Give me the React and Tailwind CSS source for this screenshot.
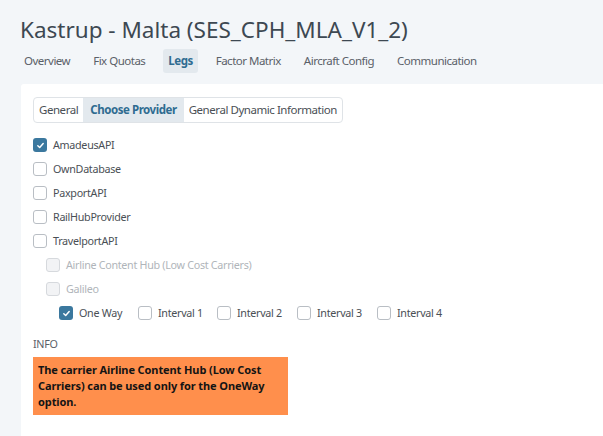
import React from "react";

function Box({ checked, disabled }) {
  if (checked) {
    return (
      <span className="w-[14px] h-[14px] rounded-[3px] bg-[#3b789e] flex items-center justify-center shrink-0">
        <svg width="9" height="9" viewBox="0 0 10 10" fill="none">
          <path d="M2 5.3 L4.1 7.3 L8 2.8" stroke="white" strokeWidth="1.6" strokeLinecap="round" strokeLinejoin="round" />
        </svg>
      </span>
    );
  }
  return (
    <span
      className={
        "w-[14px] h-[14px] rounded-[3px] border shrink-0 " +
        (disabled ? "border-[#d6d9dd] bg-[#f2f3f5]" : "border-[#b9bec4] bg-white")
      }
    />
  );
}

function Row({ label, checked, disabled, indent }) {
  return (
    <div className={"flex items-center gap-[6px] h-[24px] " + (indent || "")}>
      <Box checked={checked} disabled={disabled} />
      <span className={disabled ? "text-[#b0b5ba]" : "text-[#4a4f55]"}>{label}</span>
    </div>
  );
}

export default function App() {
  return (
    <div className="w-[603px] h-[436px] bg-[#f3f6f9] overflow-hidden font-['Noto_Sans','Open_Sans',sans-serif] text-[12px]">
      <div className="pl-[20px] pt-[14px]">
        <h1 className="text-[22.5px] leading-[32px] text-[#3d4852]">Kastrup - Malta (SES_CPH_MLA_V1_2)</h1>
        <nav className="flex items-center gap-[13px] mt-[3px] -ml-[1px] text-[11.5px] tracking-[-0.5px] text-[#5a6068]">
          <span className="px-[5px] h-[24px] flex items-center">Overview</span>
          <span className="px-[5px] h-[24px] flex items-center">Fix Quotas</span>
          <span className="px-[5px] h-[24px] flex items-center bg-[#e3e9ee] rounded-[3px] font-bold text-[#2f6c91]">Legs</span>
          <span className="px-[5px] h-[24px] flex items-center">Factor Matrix</span>
          <span className="px-[5px] h-[24px] flex items-center">Aircraft Config</span>
          <span className="px-[5px] h-[24px] flex items-center">Communication</span>
        </nav>
      </div>
      <div className="ml-[21px] mt-[11px] bg-white rounded-tl-[3px] h-[400px] pl-[12px] pt-[13px]">
        <div className="inline-flex border border-[#dfe3e7] rounded-[4px] h-[26px] items-stretch text-[11.5px] tracking-[-0.45px] text-[#4a4f55] overflow-hidden">
          <span className="px-[5px] flex items-center">General</span>
          <span className="px-[7px] flex items-center bg-[#e3e9ee] font-bold text-[#2f6c91]">Choose Provider</span>
          <span className="px-[5px] flex items-center">General Dynamic Information</span>
        </div>
        <div className="mt-[10px] text-[10.75px] tracking-[-0.3px]">
          <Row label="AmadeusAPI" checked />
          <Row label="OwnDatabase" />
          <Row label="PaxportAPI" />
          <Row label="RailHubProvider" />
          <Row label="TravelportAPI" />
          <Row label="Airline Content Hub (Low Cost Carriers)" disabled indent="ml-[13px]" />
          <Row label="Galileo" disabled indent="ml-[13px]" />
          <div className="flex items-center h-[24px] ml-[26px]">
            <div className="flex items-center gap-[6px] w-[79px]"><Box checked /><span className="text-[#4a4f55]">One Way</span></div>
            <div className="flex items-center gap-[6px] w-[79px]"><Box /><span className="text-[#4a4f55]">Interval 1</span></div>
            <div className="flex items-center gap-[6px] w-[80px]"><Box /><span className="text-[#4a4f55]">Interval 2</span></div>
            <div className="flex items-center gap-[6px] w-[80px]"><Box /><span className="text-[#4a4f55]">Interval 3</span></div>
            <div className="flex items-center gap-[6px]"><Box /><span className="text-[#4a4f55]">Interval 4</span></div>
          </div>
        </div>
        <div className="mt-[11px] text-[10.75px] tracking-[-0.3px] text-[#5a6068]">INFO</div>
        <div className="mt-[5px] w-[255px] bg-[#ff8f4c] px-[5px] py-[5px] text-[11px] tracking-[-0.1px] leading-[16px] font-bold text-[#141414]">
          The carrier Airline Content Hub (Low Cost Carriers) can be used only for the OneWay option.
        </div>
      </div>
    </div>
  );
}
